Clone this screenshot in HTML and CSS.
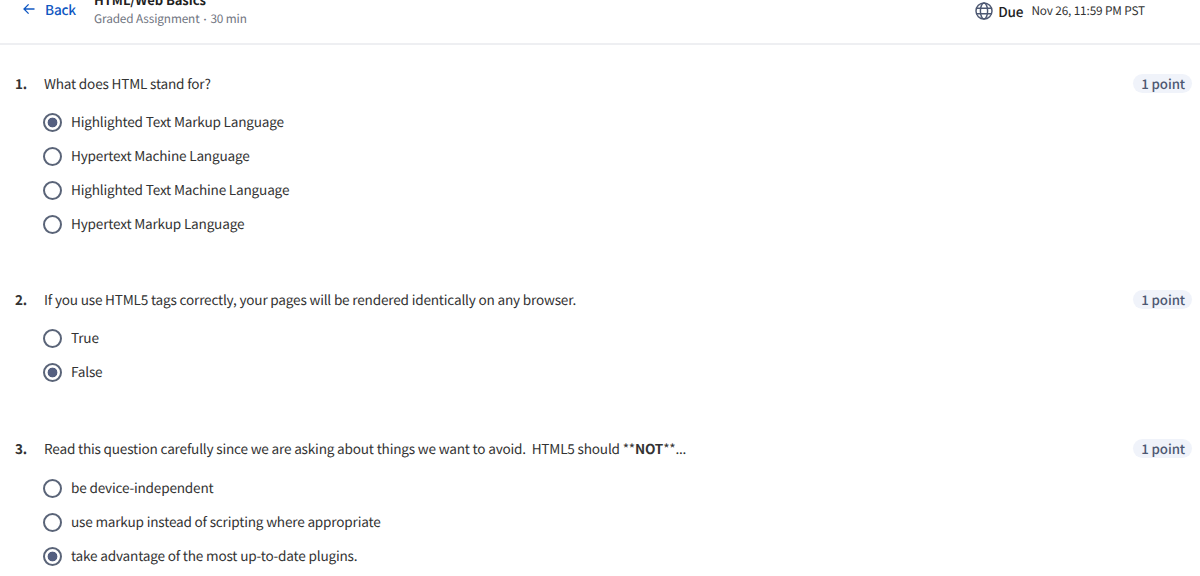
FILE: index.html
```html
<!DOCTYPE html>
<html lang="en">
<head>
<meta charset="utf-8">
<title>HTML/Web Basics</title>
<link rel="stylesheet" href="styles.css">
</head>
<body>
<header class="topbar">
  <a class="back" href="#">
    <svg class="back-icon" viewBox="0 0 14 14" width="14" height="14"><path d="M12.5 7H2M6.6 2.4 2 7l4.6 4.6" fill="none" stroke="#0f57c2" stroke-width="1.3"/></svg>
    <span class="back-label">Back</span>
  </a>
  <div class="assignment">
    <div class="assignment-title">HTML/Web Basics</div>
    <div class="assignment-meta">Graded Assignment<span class="dot">•</span>30 min</div>
  </div>
  <div class="due">
    <svg class="globe" viewBox="0 0 20 20" width="18" height="18"><g fill="none" stroke="#4d5872" stroke-width="1.6"><circle cx="10" cy="10" r="8.9"/><ellipse cx="10" cy="10" rx="4" ry="8.9"/><path d="M1.5 7h17M1.5 13h17"/></g></svg>
    <span class="due-label">Due</span>
    <span class="due-date">Nov 26, 11:59 PM PST</span>
  </div>
</header>
<main class="questions">
  <section class="question q1">
    <div class="prompt"><span class="num">1.</span><span class="text">What does HTML stand for?</span><span class="points">1 point</span></div>
    <ul class="options">
      <li class="option"><span class="radio checked"></span><span class="label">Highlighted Text Markup Language</span></li>
      <li class="option"><span class="radio"></span><span class="label">Hypertext Machine Language</span></li>
      <li class="option"><span class="radio"></span><span class="label">Highlighted Text Machine Language</span></li>
      <li class="option"><span class="radio"></span><span class="label">Hypertext Markup Language</span></li>
    </ul>
  </section>
  <section class="question q2">
    <div class="prompt"><span class="num">2.</span><span class="text">If you use HTML5 tags correctly, your pages will be rendered identically on any browser.</span><span class="points">1 point</span></div>
    <ul class="options">
      <li class="option"><span class="radio"></span><span class="label">True</span></li>
      <li class="option"><span class="radio checked"></span><span class="label">False</span></li>
    </ul>
  </section>
  <section class="question q3">
    <div class="prompt"><span class="num">3.</span><span class="text pre">Read this question carefully since we are asking about things we want to avoid.  HTML5 should **<b>NOT</b>**...</span><span class="points">1 point</span></div>
    <ul class="options">
      <li class="option"><span class="radio"></span><span class="label">be device-independent</span></li>
      <li class="option"><span class="radio"></span><span class="label">use markup instead of scripting where appropriate</span></li>
      <li class="option"><span class="radio checked"></span><span class="label">take advantage of the most up-to-date plugins.</span></li>
    </ul>
  </section>
</main>
</body>
</html>
```
FILE: styles.css
```css
html, body {
  margin: 0;
  padding: 0;
  height: 576px;
  overflow: hidden;
  background: #fff;
}
body {
  font-family: "Noto Sans CJK SC", "Noto Sans", sans-serif;
  font-size: 13.6px;
  letter-spacing: -0.19px;
  text-rendering: geometricPrecision;
  color: #333;
}
.topbar {
  height: 43px;
  border-bottom: 2px solid #eeeff2;
  display: flex;
  align-items: flex-start;
  overflow: hidden;
  padding-left: 22px;
  padding-right: 55px;
}
.back {
  display: flex;
  align-items: center;
  gap: 9px;
  color: #0f57c2;
  text-decoration: none;
  font-weight: 500;
  font-size: 13.6px;
  line-height: 20px;
  width: 72px;
  margin-top: -1px;
}
.assignment {
  margin-top: -9px;
}
.assignment-title {
  font-weight: 700;
  font-size: 13px;
  letter-spacing: -0.05px;
  line-height: 18px;
  color: #1f1f1f;
}
.assignment-meta {
  font-size: 11.8px;
  letter-spacing: -0.12px;
  line-height: 20px;
  color: #6f7480;
}
.dot {
  margin: 0 1px;
  font-size: 9px;
}
.due {
  margin-left: auto;
  display: flex;
  align-items: center;
  height: 21px;
}
.globe {
  margin-right: 5px;
}
.due-label {
  font-weight: 500;
  font-size: 13.6px;
  color: #1f1f1f;
  margin-right: 8px;
}
.due-date {
  font-size: 11.8px;
  letter-spacing: -0.14px;
  color: #333;
}
.questions {
  padding: 0 8px 0 15px;
}
.question {
  display: flex;
  flex-direction: column;
}
.q1 { padding-top: 28px; }
.q2 { padding-top: 48px; }
.q3 { padding-top: 49px; }
.prompt {
  box-sizing: border-box;
  display: flex;
  align-items: center;
  height: 22px;
  padding-bottom: 2px;
}
.num {
  width: 29px;
  font-weight: 700;
  font-size: 13.5px;
}
.text {
  flex: 1;
}
.pre { white-space: pre; }
.text b { font-weight: 700; }
.points {
  background: #f0f3fa;
  color: #4d5872;
  font-weight: 500;
  font-size: 13.3px;
  letter-spacing: -0.1px;
  line-height: 19px;
  padding: 0 7px 0 8px;
  border-radius: 10px;
}
.options {
  list-style: none;
  margin: 10px 0 0;
  padding: 0 0 0 28px;
}
.q3 .options {
  margin-top: 11px;
}
.option {
  display: flex;
  align-items: center;
  height: 34px;
}
.label {
  padding-bottom: 2px;
}
.radio {
  box-sizing: border-box;
  width: 19px;
  height: 19px;
  border: 2px solid #5a6478;
  border-radius: 50%;
  margin-right: 9px;
  background: #fff;
  flex: none;
}
.radio.checked {
  background: radial-gradient(circle, #545f80 0 4.6px, #fff 5.2px);
}
```
